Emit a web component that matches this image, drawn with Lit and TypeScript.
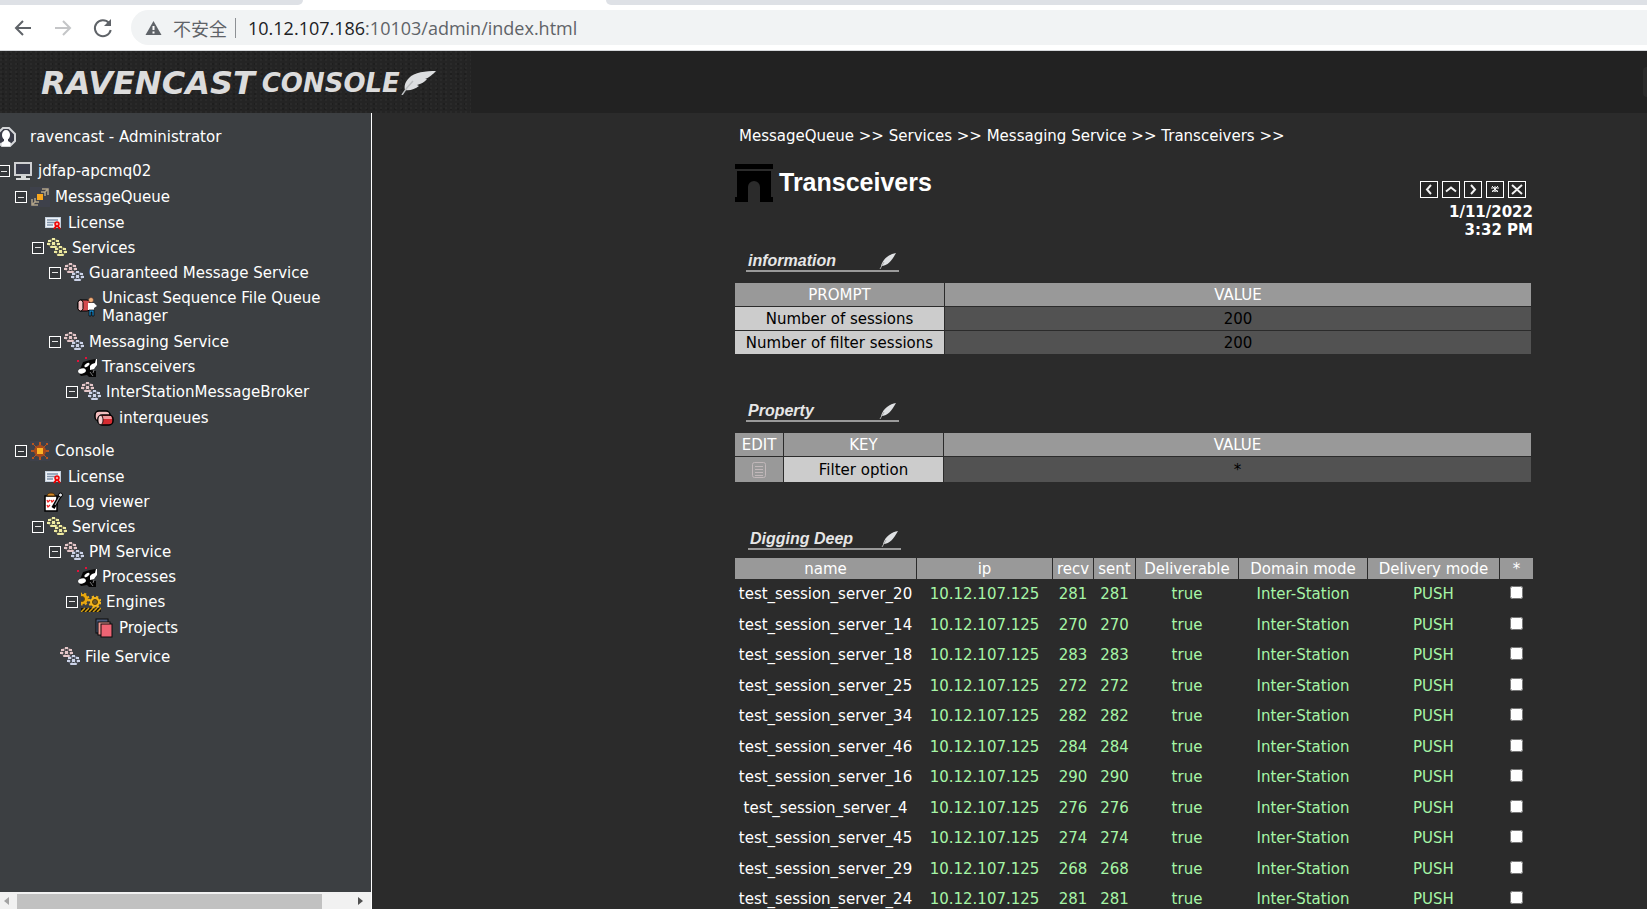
import { LitElement, html, svg, css, nothing, TemplateResult } from "lit";
import { customElement, property } from "lit/decorators.js";

type IconName =
  | "user" | "host" | "queue" | "license" | "services" | "service" | "unicast"
  | "transceiver" | "interqueue" | "console" | "log" | "engine" | "project";

interface TreeNode {
  label: string;
  icon: IconName;
  kind?: "product" | "store" | "spaced";
  wraps?: boolean;
  children?: TreeNode[];
}

const TREE: TreeNode[] = [
  {
    label: "jdfap-apcmq02", icon: "host", kind: "product",
    children: [
      {
        label: "MessageQueue", icon: "queue", kind: "product",
        children: [
          { label: "License", icon: "license" },
          {
            label: "Services", icon: "services",
            children: [
              {
                label: "Guaranteed Message Service", icon: "service",
                children: [{ label: "Unicast Sequence File Queue Manager", icon: "unicast", wraps: true }],
              },
              {
                label: "Messaging Service", icon: "service",
                children: [
                  { label: "Transceivers", icon: "transceiver" },
                  {
                    label: "InterStationMessageBroker", icon: "service",
                    children: [{ label: "interqueues", icon: "interqueue", kind: "store" }],
                  },
                ],
              },
            ],
          },
        ],
      },
      {
        label: "Console", icon: "console", kind: "product",
        children: [
          { label: "License", icon: "license" },
          { label: "Log viewer", icon: "log" },
          {
            label: "Services", icon: "services",
            children: [
              {
                label: "PM Service", icon: "service",
                children: [
                  { label: "Processes", icon: "transceiver" },
                  {
                    label: "Engines", icon: "engine",
                    children: [{ label: "Projects", icon: "project", kind: "store" }],
                  },
                ],
              },
              { label: "File Service", icon: "service", kind: "spaced" },
            ],
          },
        ],
      },
    ],
  },
];

const SESSIONS: [number, number][] = [
  [20, 281], [14, 270], [18, 283], [25, 272], [34, 282], [46, 284],
  [16, 290], [4, 276], [45, 274], [29, 268], [24, 281],
];

const hub = (x: number, y: number, light: string, dark: string) => svg`
  <g transform="translate(${x} ${y})">
    <ellipse cx="6.500" cy="5" rx="6" ry="4.500" fill=${dark} opacity=".55"></ellipse>
    <path d="M6.500 2v6M2 5l4.500-1L11 5M3 8l3.500-4L10 8" stroke="#3c3f42" fill="none" stroke-width="1"></path>
    <rect x="5" y="0" width="3" height="2" fill=${light}></rect>
    <rect x="1" y="2" width="3" height="2" fill=${light}></rect>
    <rect x="9" y="2" width="3" height="2" fill=${light}></rect>
    <rect x="5" y="4" width="3" height="3" fill=${light}></rect>
    <rect x="0" y="5" width="3" height="2" fill=${light}></rect>
    <rect x="10" y="5" width="3" height="2" fill=${light}></rect>
    <rect x="3" y="8" width="7" height="2" rx="1" fill=${light}></rect>
  </g>`;

const ICONS: Record<IconName, TemplateResult> = {
  user: svg`
    <path d="M7 1h6l6 6v7l-5 5H6l-5-5V7z" fill="#3a3c48" stroke="#d4d6d8" stroke-width="2"></path>
    <ellipse cx="10" cy="8" rx="4" ry="5" fill="#fff"></ellipse>
    <path d="M8 11h4v3l3 2-1 3H6l-1-3 3-2z" fill="#fff"></path>`,
  host: svg`
    <rect x="2" y="2" width="16" height="12" fill="#3a3d4a" stroke="#cfd0d2" stroke-width="2"></rect>
    <path d="M8 15h5v2h4v2H3v-2h5z" fill="#d9dadb"></path>`,
  queue: svg`
    <rect width="20" height="20" fill="#3e414b"></rect>
    <rect x="7" y="7" width="6" height="6" fill="#f9a61c"></rect>
    <g fill="none" stroke="#b0a288" stroke-width="1.500">
      <path d="M12 2h6v6M18 2l-4 4M11 5h4v4M2 12v6h6M2 18l4-4M5 11v4h4"></path>
    </g>`,
  license: svg`
    <rect x="2.500" y="4.500" width="15" height="10" fill="#eef2f7" stroke="#c3cfdc"></rect>
    <path d="M4 7h11M4 9.500h8M4 12h6" stroke="#7f93ab" stroke-width="1.300"></path>
    <path d="M11 16l3-4 3 4" fill="none" stroke="#f00000" stroke-width="2"></path>
    <circle cx="14" cy="11" r="2" fill="#f8a0a0" stroke="#f00000" stroke-width="1.500"></circle>`,
  services: svg`${hub(0, 0, "#f0eda4", "#a29d66")}${hub(7, 8, "#eeeaa0", "#a29d66")}`,
  service: svg`${hub(0, 0, "#e4c6c8", "#9c888b")}${hub(7, 8, "#ccd3e8", "#868fa8")}`,
  unicast: svg`
    <rect x="1" y="3" width="12" height="11" rx="3" fill="#d44a4e" stroke="#000"></rect>
    <rect x="1" y="3" width="5" height="11" rx="2.500" fill="#f6c4c6" stroke="#000"></rect>
    <circle cx="14" cy="3" r="2.500" fill="#f2b078" stroke="#422" stroke-width=".5"></circle>
    <path d="M11 6h6l3 3-3 2v2h-6z" fill="#fff"></path>
    <path d="M12 13h5v6h-2v-4h-1v4h-2z" fill="#1681c0" stroke="#000" stroke-width=".7"></path>`,
  transceiver: svg`
    <path d="M1 2l2 2M1 15l3-5 2-5 7-2 6-1 1 3-1 5-5 3 5 1v8h-5l-4-4-6 1z" fill="#050505"></path>
    <ellipse cx="5" cy="14" rx="4" ry="2.500" fill="#fff" transform="rotate(-15 5 14)"></ellipse>
    <ellipse cx="10" cy="8" rx="3" ry="1.500" fill="#fff" transform="rotate(-35 10 8)"></ellipse>
    <path d="M13 9l2-2 3-1 1-4h1v6l-3 4-4 1z" fill="#fff"></path>
    <path d="M13 15l3 4M17 13l-1 3" stroke="#777"></path>
    <path d="M8 0h2v2H8zM0 3h2v2H0z" fill="#e0123c"></path>`,
  interqueue: svg`
    <rect x="1" y="3" width="15" height="10" rx="4" fill="#f3bcbd" stroke="#000" stroke-width="1.500"></rect>
    <rect x="4" y="7" width="15" height="10" rx="4" fill="#d52b30" stroke="#000" stroke-width="1.500"></rect>
    <path d="M9 8h8l1 3H9z" fill="#f1979a"></path>
    <ellipse cx="6.500" cy="12" rx="2.500" ry="4.500" fill="#f7cfd0" stroke="#000" stroke-width=".8"></ellipse>`,
  console: svg`
    <rect width="20" height="20" fill="#3e414b"></rect>
    <path d="M10 1v18M1 10h18" stroke="#b8541e" stroke-width="2"></path>
    <circle cx="10" cy="10" r="6" fill="#a84a1c"></circle>
    <path d="M2 2h2v2H2zM16 2h2v2h-2zM2 16h2v2H2zM16 16h2v2h-2z" fill="#b8541e"></path>
    <path d="M4 4l3 3M16 4l-3 3M4 16l3-3M16 16l-3-3" stroke="#b8541e"></path>
    <rect x="7" y="7" width="6" height="6" fill="#fdb525"></rect>`,
  log: svg`
    <rect x="2" y="4" width="12" height="15" fill="#fff" stroke="#000" stroke-width="1.500"></rect>
    <path d="M4 4c0-4 8-4 8 0z" fill="#d58a28" stroke="#4a2c05"></path>
    <path d="M4 8l1 2 2-2M4 13l1 2 2-2M8 8l1 2 2-2" fill="none" stroke="#e22" stroke-width="1.300"></path>
    <path d="M17 4l-7 12" stroke="#000" stroke-width="3.500"></path>
    <path d="M17 4l-5 9" stroke="#9aa0a6" stroke-width="1.200"></path>
    <circle cx="17.500" cy="3" r="2" fill="#e4e7ea" stroke="#000"></circle>`,
  engine: svg`
    <path d="M0 16h20v4H0z" fill="#15130c"></path>
    <path d="M0 20l4-4M4 20l4-4M8 20l4-4M12 20l4-4M16 20l4-4" stroke="#d6a012" stroke-width="1.500"></path>
    <circle cx="2" cy="7" r="5" fill="#e9a80f" stroke="#e9a80f" stroke-width="3" stroke-dasharray="2 2"></circle>
    <circle cx="1" cy="7" r="2.500" fill="#3a3d40" stroke="#6b4a00"></circle>
    <circle cx="14" cy="10" r="5" fill="#f3b51c" stroke="#f3b51c" stroke-width="3" stroke-dasharray="2 2"></circle>
    <circle cx="14" cy="10" r="2.500" fill="#6b5a30" stroke="#5c3f00"></circle>`,
  project: svg`
    <rect x="2" y="1" width="12" height="14" fill="#4d5c7c" stroke="#0a0a0a"></rect>
    <rect x="4" y="4" width="12" height="13" fill="#f09a94" stroke="#0a0a0a"></rect>
    <rect x="7" y="6" width="11" height="13" fill="#ee6474" stroke="#0a0a0a"></rect>`,
};

const icon = (name: IconName) =>
  html`<svg class="icon" viewBox="0 0 20 20" width="20" height="20" aria-hidden="true">${ICONS[name]}</svg>`;

const feather = (cls: string) => html`
  <svg class=${cls} viewBox="0 0 36 24" aria-hidden="true">
    <path d="M36 0C26 0 14 1 9 7c-4 4-5 8-4 12 5 1 10-1 14-4l-2-1c4-1 8-3 10-6l-2 0C29 7 33 3 36 0z" fill="#dcdee0"></path>
    <path d="M13 10C9 14 5 19 2 24" fill="none" stroke="#b9bcbe" stroke-width="1.500"></path>
  </svg>`;

@customElement("browser-bar")
class BrowserBar extends LitElement {
  static styles = css`
    :host { display: block; background: #fff; border-bottom: 1px solid #d5d7da; }
    .tabs { display: grid; grid-template-columns: 303px 303px 1fr; height: 5px; }
    .tab { background: #dee1e6; }
    .before { border-bottom-right-radius: 5px; }
    .after { border-bottom-left-radius: 5px; }
    .tools { display: flex; align-items: center; padding: 5px 0 5px 11px; }
    .nav { display: flex; gap: 16px; margin-right: 16px; }
    .nav button { display: flex; width: 24px; height: 24px; padding: 0; border: 0; background: none; }
    .nav button:disabled { opacity: 0.5; }
    .address {
      flex: 1; display: flex; align-items: center; height: 35px; padding-left: 14px;
      border-radius: 18px 0 0 18px; background: #f1f3f4; color: #5f6368;
      font: 18px/24px "Noto Sans CJK SC", sans-serif;
    }
    .warn { margin-right: 11px; }
    .state { padding-right: 8px; margin-right: 12px; border-right: 1px solid #8d9094; line-height: 20px; }
    .host { color: #202124; }
    .url { font-family: "Open Sans", "Noto Sans", sans-serif; white-space: nowrap; }
  `;

  render() {
    return html`
      <div class="tabs"><div class="tab before"></div><div></div><div class="tab after"></div></div>
      <div class="tools">
        <div class="nav">
          <button aria-label="Back">
            <svg width="24" height="24" fill="none" stroke="#5f6368" stroke-width="2"><path d="M20 12H5M12 5l-7 7 7 7"></path></svg>
          </button>
          <button aria-label="Forward" disabled>
            <svg width="24" height="24" fill="none" stroke="#8a8d91" stroke-width="2"><path d="M4 12h15M12 5l7 7-7 7"></path></svg>
          </button>
          <button aria-label="Reload">
            <svg width="24" height="24" fill="none" stroke="#5f6368" stroke-width="2">
              <path d="M18 7a8 8 0 1 0 1.700 7"></path><path d="M20 3v7h-7z" fill="#5f6368" stroke="none"></path>
            </svg>
          </button>
        </div>
        <div class="address">
          <svg class="warn" width="17" height="16" aria-hidden="true">
            <path d="M8.500 1L16.500 15H.5z" fill="#5f6368"></path><path d="M8.500 6v4M8.500 11.500v2" stroke="#fff" stroke-width="2"></path>
          </svg>
          <span class="state">不安全</span>
          <span class="url"><span class="host">10.12.107.186</span>:10103/admin/index.html</span>
        </div>
      </div>`;
  }
}

@customElement("nav-tree")
class NavTree extends LitElement {
  static styles = css`
    :host { display: flex; flex-direction: column; overflow: hidden; background: #3c3f42; border-right: 1px solid #fff; color: #fff; }
    .body { flex: 1; min-height: 0; overflow: hidden; padding-top: 11px; margin-left: -2px; }
    ul { list-style: none; margin: 0; padding: 0; }
    ul ul { padding-left: 17px; }
    .row { display: flex; align-items: center; gap: 5px; min-height: 25px; line-height: 18px; }
    .row.user { min-height: 26px; margin: 0 0 8px -2px; gap: 14px; }
    .row.product { min-height: 26px; }
    .row.store { min-height: 27px; }
    .row.spaced { margin-top: 3px; }
    .row.wraps { min-height: 44px; }
    .row.wraps a { max-width: 232px; }
    .row.leaf { padding-left: 11px; }
    li + li > .row.product { margin-top: 7px; }
    .icon { flex: none; }
    a { color: inherit; text-decoration: none; }
    .toggle {
      flex: none; display: grid; place-items: center; box-sizing: border-box; width: 12px; height: 12px;
      padding: 0; border: 1px solid #fff; background: #35383b; margin-right: -2px;
    }
    .toggle::before { content: ""; width: 6px; height: 1px; background: #e4e4e4; }
    .scroll { display: flex; align-items: center; height: 17px; background: #f1f1f1; }
    .scroll button { flex: none; display: flex; width: 17px; height: 17px; padding: 0; border: 0; background: none; }
    .track { flex: 1; padding-right: 32px; height: 15px; display: flex; align-self: flex-end; }
    .thumb { flex: 1; background: #c1c1c1; }
  `;

  private node(n: TreeNode): TemplateResult {
    const cls = ["row", n.kind ?? "", n.wraps ? "wraps" : "", n.children ? "" : "leaf"].join(" ");
    return html`<li>
      <div class=${cls}>
        ${n.children ? html`<button class="toggle" aria-label="Collapse ${n.label}"></button>` : nothing}
        ${icon(n.icon)}<a href="#">${n.label}</a>
      </div>
      ${n.children ? html`<ul>${n.children.map((c) => this.node(c))}</ul>` : nothing}
    </li>`;
  }

  render() {
    return html`
      <div class="body">
        <div class="row user">${icon("user")}<span>ravencast - Administrator</span></div>
        <ul>${TREE.map((n) => this.node(n))}</ul>
      </div>
      <div class="scroll">
        <button aria-label="Scroll left"><svg width="17" height="17"><path d="M9 5v8L4 9z" fill="#a3a3a3"></path></svg></button>
        <div class="track"><div class="thumb"></div></div>
        <button aria-label="Scroll right"><svg width="17" height="17"><path d="M4 5v8l5-4z" fill="#505050"></path></svg></button>
      </div>`;
  }
}

@customElement("section-title")
class SectionTitle extends LitElement {
  @property() label = "";
  static styles = css`
    :host { display: block; }
    h2 {
      display: flex; align-items: center; justify-content: space-between; box-sizing: border-box;
      width: 153px; height: 22px; margin: 0; padding: 2px 2px 0; border-bottom: 2px solid #9a9a9a;
      font: italic bold 16px/18px "Liberation Sans", Arial, sans-serif; color: #e6e6e6;
    }
    .quill { width: 18px; height: 17px; }
  `;
  render() {
    return html`<h2>${this.label}
      <svg class="quill" viewBox="0 0 18 17" aria-hidden="true">
        <path d="M17 0C11 1 4 5 2 13c7 0 11-6 15-13z" fill="#dfe1e3"></path>
        <path d="M5 9L1 16" stroke="#aaa"></path>
      </svg></h2>`;
  }
}

@customElement("transceiver-view")
class TransceiverView extends LitElement {
  static styles = css`
    :host { display: block; overflow: hidden; padding: 14px 114px 0 363px; color: #fff; background: #2b2b2b; }
    .crumbs { padding-left: 4px; line-height: 18px; white-space: nowrap; }
    a { color: inherit; text-decoration: none; }
    .head { display: flex; justify-content: space-between; margin-top: 19px; }
    .title { display: flex; align-items: center; gap: 6px; height: 38px; }
    h1 { margin: 0; padding-bottom: 2px; font: bold 25px/30px "Liberation Sans", Arial, sans-serif; }
    .side { padding-top: 17px; text-align: right; font-weight: bold; line-height: 18px; }
    .tools { display: flex; justify-content: flex-end; gap: 4px; margin: 0 7px 5px 0; }
    .tools button { box-sizing: border-box; display: flex; width: 18px; height: 17px; padding: 0; border: 1px solid #fff; background: #252525; }
    section-title { margin: 46px 0 11px 11px; }
    .head + section-title { margin-top: 11px; }
    .deep { margin: 46px 0 8px 13px; }
    table { table-layout: fixed; width: 100%; border-spacing: 0; text-align: center; white-space: nowrap; line-height: 18px; }
    .info { width: calc(100% - 2px); }
    th { font-weight: normal; background: #999; }
    th, td { padding: 0; }
    th + th, .info td { background-clip: padding-box; }
    tr > * + * { border-left: 1px solid #2b2b2b; }
    .info th { height: 23px; }
    .info td { height: 23px; border-top: 1px solid #2b2b2b; background-color: #525252; color: #000; }
    .info td.key { background-color: #ccc; }
    .info td.edit { height: 25px; background-color: #999; }
    .edit button { display: inline-flex; padding: 0; border: 0; background: none; vertical-align: middle; }
    .prompt { width: 209px; }
    .c-edit { width: 48px; }
    .c-key { width: 160px; }
    .n { width: 181px; } .i { width: 136px; } .r { width: 41px; } .s { width: 42px; }
    .d { width: 103px; } .o { width: 129px; } .v { width: 132px; } .x { width: 34px; }
    .list th { height: 21px; }
    .list td { height: 30px; color: #a6f5a6; }
    .list tr:nth-child(even) td { height: 31px; }
    .list td.name { color: #fff; }
    input { display: block; width: 13px; height: 13px; margin: 0 auto 3px; }
  `;

  render() {
    const tools: [string, string][] = [
      ["Back", "M10 3L6 7.500l4 4.500"],
      ["Up", "M3 9.500l5-4 5 4"],
      ["Forward", "M6 3l4 4.500L6 12"],
      ["Refresh", "M8 4v6M4 6h8M5 9h6M5 4l6 6M11 4l-6 6"],
      ["Close", "M3 3l5 4.500L13 3M3 12l5-4.500 5 4.500"],
    ];
    return html`
      <nav class="crumbs" aria-label="Breadcrumb">
        ${["MessageQueue", "Services", "Messaging Service", "Transceivers"].map((c) => html`<a href="#">${c}</a> &gt;&gt; `)}
      </nav>
      <div class="head">
        <div class="title">
          <svg width="38" height="38" aria-hidden="true">
            <path d="M0 0h38v5H0zM2 7h34v26h2v5H25V23a6 6 0 0 0-12 0v15H0v-5h2z"></path>
          </svg>
          <h1>Transceivers</h1>
        </div>
        <div class="side">
          <div class="tools">
            ${tools.map(([label, d]) => html`<button aria-label=${label}>
              <svg width="16" height="15" fill="none" stroke="#f2f2f2" stroke-width=${label === "Refresh" ? 1 : 2}><path d=${d}></path></svg>
            </button>`)}
          </div>
          1/11/2022<br>3:32 PM
        </div>
      </div>

      <section-title label="information"></section-title>
      <table class="info">
        <colgroup><col class="prompt"><col></colgroup>
        <thead><tr><th>PROMPT</th><th>VALUE</th></tr></thead>
        <tbody>
          <tr><td class="key">Number of sessions</td><td>200</td></tr>
          <tr><td class="key">Number of filter sessions</td><td>200</td></tr>
        </tbody>
      </table>

      <section-title label="Property"></section-title>
      <table class="info">
        <colgroup><col class="c-edit"><col class="c-key"><col></colgroup>
        <thead><tr><th>EDIT</th><th>KEY</th><th>VALUE</th></tr></thead>
        <tbody>
          <tr>
            <td class="edit"><button aria-label="Edit filter option">
              <svg width="16" height="18" fill="none" stroke="#c2b8ba">
                <rect x="1.500" y="1.500" width="13" height="15" rx="2"></rect><path d="M4 5.500h8M4 8.500h8M4 11.500h8M4 14.500h8"></path>
              </svg></button></td>
            <td class="key">Filter option</td><td>*</td>
          </tr>
        </tbody>
      </table>

      <section-title class="deep" label="Digging Deep"></section-title>
      <table class="list">
        <colgroup>
          <col class="n"><col class="i"><col class="r"><col class="s"><col class="d"><col class="o"><col class="v"><col class="x">
        </colgroup>
        <thead>
          <tr><th>name</th><th>ip</th><th>recv</th><th>sent</th><th>Deliverable</th><th>Domain mode</th><th>Delivery mode</th><th>*</th></tr>
        </thead>
        <tbody>
          ${SESSIONS.map(([id, count]) => html`<tr>
            <td class="name">test_session_server_${id}</td><td>10.12.107.125</td><td>${count}</td><td>${count}</td>
            <td>true</td><td>Inter-Station</td><td>PUSH</td>
            <td><input type="checkbox" aria-label="Select test_session_server_${id}"></td>
          </tr>`)}
        </tbody>
      </table>`;
  }
}

@customElement("app-root")
class AppRoot extends LitElement {
  static styles = css`
    :host {
      display: flex; flex-direction: column; height: 100vh; overflow: hidden; background: #2b2b2b;
      font: 15px/18px "DejaVu Sans", Verdana, sans-serif;
    }
    .banner { flex: none; display: flex; align-items: center; justify-content: space-between; height: 62px; background: #222; }
    .logo {
      display: flex; align-items: center; box-sizing: border-box; width: 471px; height: 62px; padding: 2px 0 0 41px;
      background:
        radial-gradient(circle at 1px 1px, #2a2a2a 1px, transparent 1px) 0 0 / 5px 4px,
        radial-gradient(circle at 1px 1px, #1e1e1e 1px, transparent 1px) 2px 2px / 7px 5px,
        #242424;
      color: #dcdcdc; font-style: italic; font-weight: bold; white-space: nowrap;
    }
    .brand { font-size: 32px; line-height: 40px; }
    .product { font-size: 26px; line-height: 40px; margin-left: 7px; }
    .plume { flex: none; width: 36px; height: 24px; }
    .drawer { width: 4px; height: 30px; border-radius: 4px 0 0 4px; background: #2b2b2b; }
    .frames { flex: 1; min-height: 0; display: grid; grid-template-columns: 372px minmax(0, 1fr); grid-template-rows: minmax(0, 1fr); }
  `;

  render() {
    return html`
      <browser-bar></browser-bar>
      <header class="banner">
        <div class="logo">
          <span class="brand">RAVENCAST</span><span class="product">CONSOLE</span>${feather("plume")}
        </div>
        <div class="drawer"></div>
      </header>
      <div class="frames">
        <nav-tree></nav-tree>
        <transceiver-view></transceiver-view>
      </div>`;
  }
}
